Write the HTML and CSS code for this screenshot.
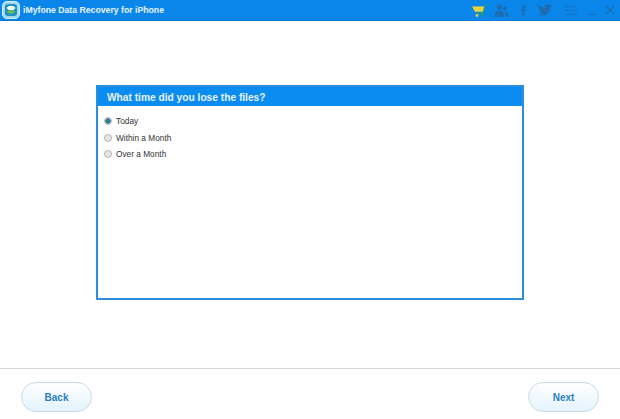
FILE: index.html
```html
<!DOCTYPE html>
<html lang="en">
<head>
<meta charset="utf-8">
<title>iMyfone Data Recovery for iPhone</title>
<link rel="stylesheet" href="styles.css">
</head>
<body>
<div class="app">
  <header class="titlebar">
    <div class="brand">
      <svg class="logo" width="18" height="18" viewBox="0 0 18 18"><rect x="0.5" y="0.5" width="17" height="17" rx="4.500" fill="#9fd8f2" stroke="#d5f0fb"/><rect x="3" y="3" width="12" height="12" rx="3" fill="#1e8fc4"/><path d="M4.500 7C6.500 4 11.500 4 13.500 7L11.500 9H6.500Z" fill="#eef8e6"/><path d="M5 10.500C7.500 8.500 10.500 8.500 13 10.500C11.500 13.500 6.500 13.500 5 10.500Z" fill="#6fc04a"/></svg>
      <span class="app-title">iMyfone Data Recovery for iPhone</span>
    </div>
    <div class="tools">
      <svg class="tool-cart" width="16" height="13" viewBox="0 0 16 13"><path d="M15.500 0.800L12.800 1.800L11 9.500H4" fill="none" stroke="#1a9a8a" stroke-width="1.500"/><path d="M0 2.500H12L10.800 7.800H3Z" fill="#f4d93a"/><path d="M1.500 4.400H11.500M2.500 6.200H11" stroke="#c8c838" stroke-width="0.600"/><circle cx="5" cy="11.500" r="1.400" fill="#e0d040"/><circle cx="10" cy="11.500" r="1.400" fill="#1a9a8a"/></svg>
      <svg class="tool-people" width="15" height="13" viewBox="0 0 15 13"><g fill="#1c6db4"><circle cx="5.500" cy="3" r="2.600"/><path d="M0.500 13C0.500 8 2.500 6.500 5.500 6.500S10.500 8 10.500 13H8L7 10.500L6.500 13H4.500L4 10.500L3 13Z"/><circle cx="11" cy="4.500" r="2"/><path d="M10.500 7.500C13 7.500 14.800 9 14.800 13H11.800C11.800 11 11.500 9 10.500 7.500Z"/></g></svg>
      <svg class="tool-fb" width="7" height="13" viewBox="0 0 9 14"><path d="M3 14V8H1V5.500H3V3.500C3 1.500 4.200 0.500 6 0.500H8V3H6.600C5.900 3 5.700 3.300 5.700 4V5.500H8L7.600 8H5.700V14Z" fill="#1c6db4"/></svg>
      <svg class="tool-tw" width="14" height="12" viewBox="0 0 24 20"><path d="M24 2.400c-.9.400-1.800.7-2.800.8 1-.6 1.800-1.600 2.200-2.700-1 .6-2 1-3.100 1.200A4.900 4.900 0 0 0 11.900 6.200C7.800 6 4.200 4 1.700.9c-1.300 2.200-.7 5.100 1.500 6.600-.8 0-1.600-.2-2.200-.6 0 2.300 1.600 4.400 3.900 4.900-.7.200-1.500.2-2.200.1.600 2 2.400 3.400 4.600 3.400A9.900 9.900 0 0 1 0 17.300 14 14 0 0 0 7.500 19.500c9.100 0 14.300-7.700 14-14.600 1-.7 1.800-1.600 2.500-2.500Z" fill="#1c6db4"/></svg>
      <svg class="tool-menu" width="12" height="9" viewBox="0 0 12 9"><g fill="#1870c0"><rect y="0" width="12" height="1"/><rect y="4" width="12" height="1"/><rect y="8" width="12" height="1"/></g></svg>
      <svg class="tool-min" width="10" height="9" viewBox="0 0 10 9"><rect y="8" width="10" height="1" fill="#1870c0"/></svg>
      <svg class="tool-close" width="10" height="10" viewBox="0 0 10 10"><path d="M1 1L9 9M9 1L1 9" stroke="#1c6db4" stroke-width="1.300" fill="none"/></svg>
    </div>
  </header>
  <main class="stage">
    <section class="panel">
      <h1 class="panel-head">What time did you lose the files?</h1>
      <form class="options">
        <label class="option"><input class="radio" type="radio" name="t" checked>Today</label>
        <label class="option"><input class="radio" type="radio" name="t">Within a Month</label>
        <label class="option"><input class="radio" type="radio" name="t">Over a Month</label>
      </form>
    </section>
  </main>
  <footer class="footer">
    <button class="btn" type="button">Back</button>
    <button class="btn" type="button">Next</button>
  </footer>
</div>
</body>
</html>
```
FILE: styles.css
```css
* { box-sizing: border-box; }
html, body { margin: 0; height: 100%; background: #fff; overflow: hidden; }
body { font-family: "Liberation Sans", sans-serif; }
.app { width: 620px; height: 419px; display: flex; flex-direction: column; }
.titlebar {
  height: 21px; flex: none; background: #0a86ea; border-bottom: 1px solid #0a76d8;
  display: flex; align-items: center; justify-content: space-between;
  padding: 0 5px 0 2px;
}
.brand { display: flex; align-items: center; gap: 3px; }
.app-title { color: #e8f4ff; font-size: 8.700px; font-weight: 700; }
.tools { display: flex; align-items: center; }
.tool-people { margin-left: 6px; }
.tool-fb { margin-left: 11px; }
.tool-tw { margin-left: 11px; }
.tool-menu { margin-left: 13px; }
.tool-min { margin-left: 10px; }
.tool-close { margin-left: 8px; }
.stage { flex: 1; display: flex; justify-content: center; padding-top: 64px; }
.panel { width: 428px; height: 215px; border: 2px solid #2b8fdd; background: #fff; }
.panel-head {
  margin: 0; height: 19px; background: #0a8cf0; color: #e8f4ff;
  font-size: 10.200px; font-weight: 700; line-height: 22px; padding-left: 9px;
}
.options { display: flex; flex-direction: column; padding-top: 7px; }
.option { display: flex; align-items: center; height: 16.500px; font-size: 8.300px; color: #333; padding-left: 6px; }
.radio {
  appearance: none; width: 8px; height: 8px; margin: 0 4px 0 0; border-radius: 50%;
  border: 1px solid #b4b8bc; background: #e4e6e8;
}
.radio:checked { background: radial-gradient(circle, #2f7f92 0 2.500px, #dfe6ea 3px); }
.footer {
  height: 51px; flex: none; border-top: 1px solid #d8d8d8;
  display: flex; justify-content: space-between; align-items: flex-start;
  padding: 13px 21px 0;
}
.btn {
  width: 71px; height: 30px; border: 1px solid #c6dbe8; border-radius: 15px;
  background: linear-gradient(#ffffff, #e3f3fd); color: #2a80bf;
  font-family: "Liberation Sans", sans-serif; font-size: 10px; font-weight: 700;
}
```
